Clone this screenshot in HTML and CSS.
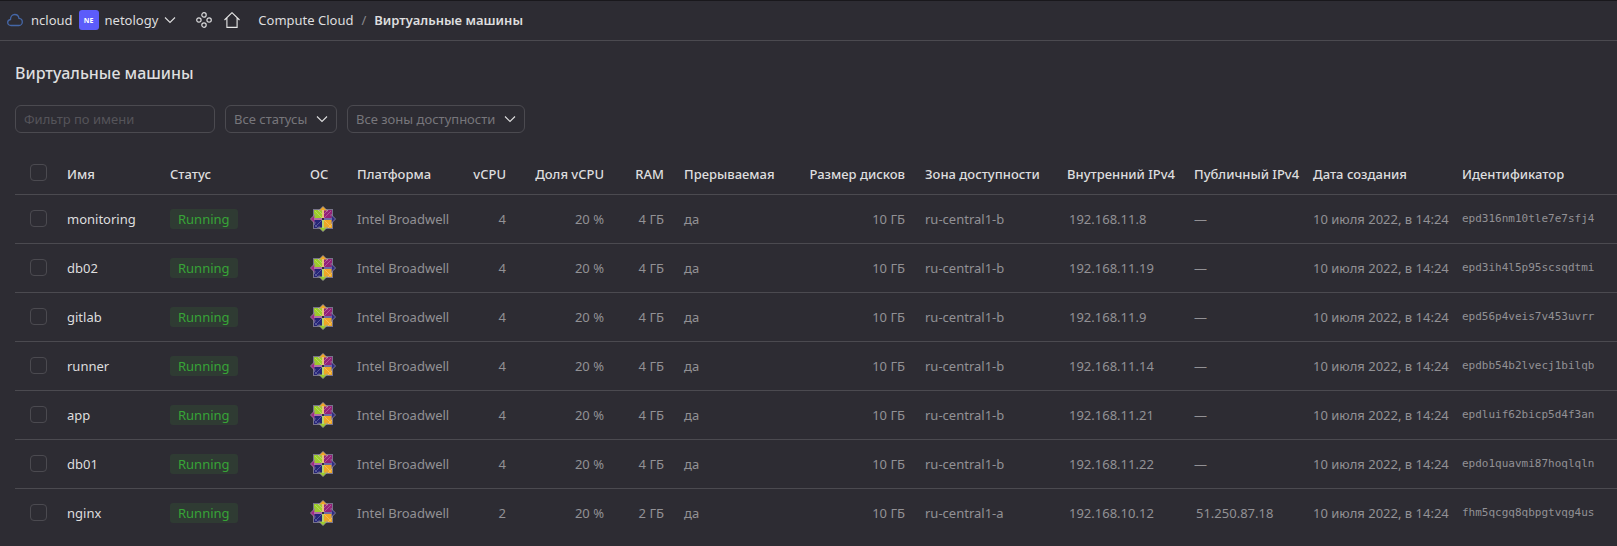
FILE: index.html
```html
<!DOCTYPE html>
<html lang="ru">
<head>
<meta charset="utf-8">
<meta name="viewport" content="width=device-width, initial-scale=1">
<title>Виртуальные машины</title>
<link rel="stylesheet" href="styles.css">
</head>
<body>
<svg class="sprite" aria-hidden="true">
  <symbol id="chevron" viewBox="0 0 12 12"><path d="M1 3.500 6 8.500 11 3.500" fill="none" stroke="currentColor" stroke-width="1.100"/></symbol>
  <symbol id="centos" viewBox="0 0 26 26">
    <path d="M3 3H23V23H3Z" fill="#77738a"/>
    <path d="M4 4H12V12H4Z" fill="#9ccd2a"/>
    <path d="M14 4H22V12H14Z" fill="#932279"/>
    <path d="M4 14H12V22H4Z" fill="#262577"/>
    <path d="M14 14H22V22H14Z" fill="#efa724"/>
    <g stroke="#a39eae" stroke-width=".7">
      <path d="M13 .4 17.500 5H8.500Z" fill="#efa724"/>
      <path d="M25.600 13 21 17.500V8.500Z" fill="#2f2e83"/>
      <path d="M13 25.600 8.500 21H17.500Z" fill="#9ccd2a"/>
      <path d="M.4 13 5 8.500V17.500Z" fill="#a02a86"/>
    </g>
    <path d="M9 4.500H12V8ZM4.500 9V12H8Z" fill="#9ccd2a"/>
    <path d="M17 4.500H14V8ZM21.500 9V12H18Z" fill="#932279"/>
    <path d="M9 21.500H12V18ZM4.500 17V14H8Z" fill="#262577"/>
    <path d="M17 21.500H14V18ZM21.500 17V14H18Z" fill="#efa724"/>
    <path d="M12 4H14V12H12Z" fill="#e8c078"/>
    <path d="M14 12H22V14H14Z" fill="#6f6ca5"/>
    <path d="M12 14H14V22H12Z" fill="#b9d46f"/>
    <path d="M4 12H12V14H4Z" fill="#b06fa6"/>
    <path d="M5 5 21 21M21 5 5 21M8 4 12 8M18 4 14 8M4 18 8 22M22 18 18 22" fill="none" stroke="#fff" stroke-opacity=".35" stroke-width=".7"/>
    <path d="M12 12H14V14H12Z" fill="#302c3f"/>
  </symbol>
</svg>

<header class="topbar">
  <a class="crumb cloud" href="#">
    <svg class="cloud-icon" viewBox="0 0 16 14" aria-hidden="true"><path d="M4 12.500C2 12.500.7 11.200.7 9.500S2 6.700 3.500 6.500C3.500 3.500 5.300 1.500 7.700 1.500S11.600 3 12 5.300C14 5.500 15.300 7 15.300 8.900S13.900 12.500 12 12.500Z" fill="none" stroke="#4567a8" stroke-width="1.300"/></svg>
    ncloud
  </a>
  <button class="folder" type="button">
    <span class="avatar">NE</span>
    <span>netology</span>
    <svg class="chevron" aria-hidden="true"><use href="#chevron"/></svg>
  </button>
  <div class="shortcuts">
    <a href="#" aria-label="Сервисы"><svg class="nav-icon" viewBox="0 0 16 16" aria-hidden="true"><g fill="none" stroke="#d8d8da" stroke-width="1.200"><circle cx="8" cy="2.900" r="2.200"/><circle cx="2.900" cy="8" r="2.200"/><circle cx="13.100" cy="8" r="2.200"/><circle cx="8" cy="13.100" r="2.200"/></g></svg></a>
    <a href="#" aria-label="Главная"><svg class="nav-icon" viewBox="0 0 16 16" aria-hidden="true"><path d="M.5 8 8 .7 15.500 8M2.900 6V15.400H13.100V6" fill="none" stroke="#e8e8e8" stroke-width="1.100"/></svg></a>
  </div>
  <nav class="breadcrumbs" aria-label="Навигация">
    <a class="crumb" href="#">Compute Cloud</a>
    <span class="slash">/</span>
    <a class="crumb current" href="#">Виртуальные машины</a>
  </nav>
</header>

<main class="content">
  <h1 class="title">Виртуальные машины</h1>

  <form class="filters">
    <input class="field name-filter" type="text" placeholder="Фильтр по имени" aria-label="Фильтр по имени">
    <div class="picker">
      <select class="field" aria-label="Статус"><option>Все статусы</option></select>
      <svg class="chevron" aria-hidden="true"><use href="#chevron"/></svg>
    </div>
    <div class="picker">
      <select class="field" aria-label="Зона доступности"><option>Все зоны доступности</option></select>
      <svg class="chevron" aria-hidden="true"><use href="#chevron"/></svg>
    </div>
  </form>

  <table class="machines">
    <colgroup>
      <col class="c-check"><col class="c-name"><col class="c-status"><col class="c-os"><col class="c-platform"><col class="c-cpu"><col class="c-share"><col class="c-ram"><col class="c-preempt"><col class="c-disk"><col class="c-zone"><col class="c-internal"><col class="c-public"><col class="c-date"><col class="c-id">
    </colgroup>
    <thead>
      <tr>
        <th class="check"><input type="checkbox" aria-label="Выбрать все"></th>
        <th>Имя</th><th>Статус</th><th>ОС</th><th>Платформа</th><th class="num">vCPU</th><th class="num">Доля vCPU</th><th class="num">RAM</th><th>Прерываемая</th><th class="num">Размер дисков</th><th>Зона доступности</th><th>Внутренний IPv4</th><th>Публичный IPv4</th><th>Дата создания</th><th>Идентификатор</th>
      </tr>
    </thead>
    <tbody>
      <tr><td class="check"><input type="checkbox" aria-label="monitoring"></td><td class="name">monitoring</td><td><span class="badge">Running</span></td><td><svg class="os"><use href="#centos"/></svg></td><td>Intel Broadwell</td><td class="num">4</td><td class="num">20 %</td><td class="num">4 ГБ</td><td>да</td><td class="num">10 ГБ</td><td>ru-central1-b</td><td class="ip">192.168.11.8</td><td>—</td><td>10 июля 2022, в 14:24</td><td class="id">epd316nm10tle7e7sfj4</td></tr>
      <tr><td class="check"><input type="checkbox" aria-label="db02"></td><td class="name">db02</td><td><span class="badge">Running</span></td><td><svg class="os"><use href="#centos"/></svg></td><td>Intel Broadwell</td><td class="num">4</td><td class="num">20 %</td><td class="num">4 ГБ</td><td>да</td><td class="num">10 ГБ</td><td>ru-central1-b</td><td class="ip">192.168.11.19</td><td>—</td><td>10 июля 2022, в 14:24</td><td class="id">epd3ih4l5p95scsqdtmi</td></tr>
      <tr><td class="check"><input type="checkbox" aria-label="gitlab"></td><td class="name">gitlab</td><td><span class="badge">Running</span></td><td><svg class="os"><use href="#centos"/></svg></td><td>Intel Broadwell</td><td class="num">4</td><td class="num">20 %</td><td class="num">4 ГБ</td><td>да</td><td class="num">10 ГБ</td><td>ru-central1-b</td><td class="ip">192.168.11.9</td><td>—</td><td>10 июля 2022, в 14:24</td><td class="id">epd56p4veis7v453uvrr</td></tr>
      <tr><td class="check"><input type="checkbox" aria-label="runner"></td><td class="name">runner</td><td><span class="badge">Running</span></td><td><svg class="os"><use href="#centos"/></svg></td><td>Intel Broadwell</td><td class="num">4</td><td class="num">20 %</td><td class="num">4 ГБ</td><td>да</td><td class="num">10 ГБ</td><td>ru-central1-b</td><td class="ip">192.168.11.14</td><td>—</td><td>10 июля 2022, в 14:24</td><td class="id">epdbb54b2lvecj1bilqb</td></tr>
      <tr><td class="check"><input type="checkbox" aria-label="app"></td><td class="name">app</td><td><span class="badge">Running</span></td><td><svg class="os"><use href="#centos"/></svg></td><td>Intel Broadwell</td><td class="num">4</td><td class="num">20 %</td><td class="num">4 ГБ</td><td>да</td><td class="num">10 ГБ</td><td>ru-central1-b</td><td class="ip">192.168.11.21</td><td>—</td><td>10 июля 2022, в 14:24</td><td class="id">epdluif62bicp5d4f3an</td></tr>
      <tr><td class="check"><input type="checkbox" aria-label="db01"></td><td class="name">db01</td><td><span class="badge">Running</span></td><td><svg class="os"><use href="#centos"/></svg></td><td>Intel Broadwell</td><td class="num">4</td><td class="num">20 %</td><td class="num">4 ГБ</td><td>да</td><td class="num">10 ГБ</td><td>ru-central1-b</td><td class="ip">192.168.11.22</td><td>—</td><td>10 июля 2022, в 14:24</td><td class="id">epdo1quavmi87hoqlqln</td></tr>
      <tr><td class="check"><input type="checkbox" aria-label="nginx"></td><td class="name">nginx</td><td><span class="badge">Running</span></td><td><svg class="os"><use href="#centos"/></svg></td><td>Intel Broadwell</td><td class="num">2</td><td class="num">20 %</td><td class="num">2 ГБ</td><td>да</td><td class="num">10 ГБ</td><td>ru-central1-a</td><td class="ip">192.168.10.12</td><td class="ip">51.250.87.18</td><td>10 июля 2022, в 14:24</td><td class="id">fhm5qcgq8qbpgtvqg4us</td></tr>
    </tbody>
  </table>
</main>
</body>
</html>
```

FILE: styles.css
```css
* { box-sizing: border-box; }

body {
  margin: 0;
  background: #2d2c33;
  color: #dededf;
  font: 13px/18px "Noto Sans", sans-serif;
}

.sprite { display: none; }

a { color: inherit; text-decoration: none; }
svg { display: block; }

.topbar {
  display: flex;
  align-items: center;
  height: 41px;
  padding: 0 7px 1px;
  border-top: 1px solid #19181c;
  border-bottom: 1px solid #4b4a50;
  white-space: nowrap;
}

.cloud { display: flex; align-items: center; gap: 8px; }
.cloud-icon { width: 16px; height: 14px; }

.folder {
  display: flex;
  align-items: center;
  gap: 6px;
  margin-left: 6px;
  padding: 0;
  border: 0;
  background: none;
  color: inherit;
  font: inherit;
}

.avatar {
  width: 20px;
  height: 20px;
  border-radius: 3px;
  background: #5c5cfa;
  color: #fff;
  font-size: 7px;
  font-weight: 700;
  line-height: 22px;
  text-align: center;
}

.chevron { width: 12px; height: 12px; color: #dededf; }

.shortcuts { display: flex; gap: 12px; margin-left: 20px; }
.nav-icon { width: 16px; height: 16px; }

.breadcrumbs { display: flex; gap: 8px; margin-left: 18px; }
.slash { color: #89888c; }
.current { font-weight: 600; }

.content { padding: 20px 0 0 15px; }

.title {
  margin: 0;
  font-size: 16px;
  font-weight: 500;
  line-height: 24px;
}

.filters { display: flex; gap: 10px; margin-top: 20px; }

.field {
  height: 28px;
  padding: 0 8px;
  border: 1px solid #4b4a50;
  border-radius: 6px;
  background: transparent;
  color: #77767b;
  font: inherit;
  appearance: none;
}

.field::placeholder { color: #55545a; opacity: 1; }
.name-filter { width: 200px; }

.picker { display: grid; align-items: center; }
.picker > * { grid-area: 1 / 1; }
.picker .field { padding-right: 28px; }
.picker .chevron { justify-self: end; margin-right: 9px; pointer-events: none; }

.machines {
  width: 100%;
  margin-top: 17px;
  border-collapse: separate;
  border-spacing: 0;
  table-layout: fixed;
  white-space: nowrap;
}

.c-check { width: 42px; }
.c-name { width: 103px; }
.c-status { width: 140px; }
.c-os { width: 47px; }
.c-platform { width: 109px; }
.c-cpu { width: 60px; }
.c-share { width: 98px; }
.c-ram { width: 60px; }
.c-preempt { width: 120px; }
.c-disk { width: 121px; }
.c-zone { width: 142px; }
.c-internal { width: 127px; }
.c-public { width: 119px; }
.c-date { width: 149px; }

th, td { padding: 0 10px; text-align: left; }

th {
  height: 45px;
  padding-top: 4px;
  border-bottom: 1px solid #4b4a50;
  font-weight: 500;
}

td { height: 49px; border-bottom: 1px solid #4b4a50; color: #929195; }
tr:last-child td { border-bottom-color: transparent; }

.num { text-align: right; }
.name { color: #dededf; }
.ip { padding-left: 12px; }
.id { font: 11px/18px "DejaVu Sans Mono", monospace; }

.check { padding: 0 0 0 15px; }
td.check { padding-bottom: 1px; }

.check input {
  display: block;
  width: 17px;
  height: 17px;
  margin: 0;
  border: 1px solid #4b4a50;
  border-radius: 4px;
  appearance: none;
}

.badge {
  display: inline-block;
  padding: 0 8px;
  border-radius: 3px;
  background: #2f3b33;
  color: #37a437;
  line-height: 20px;
}

.os { width: 26px; height: 26px; }
```
